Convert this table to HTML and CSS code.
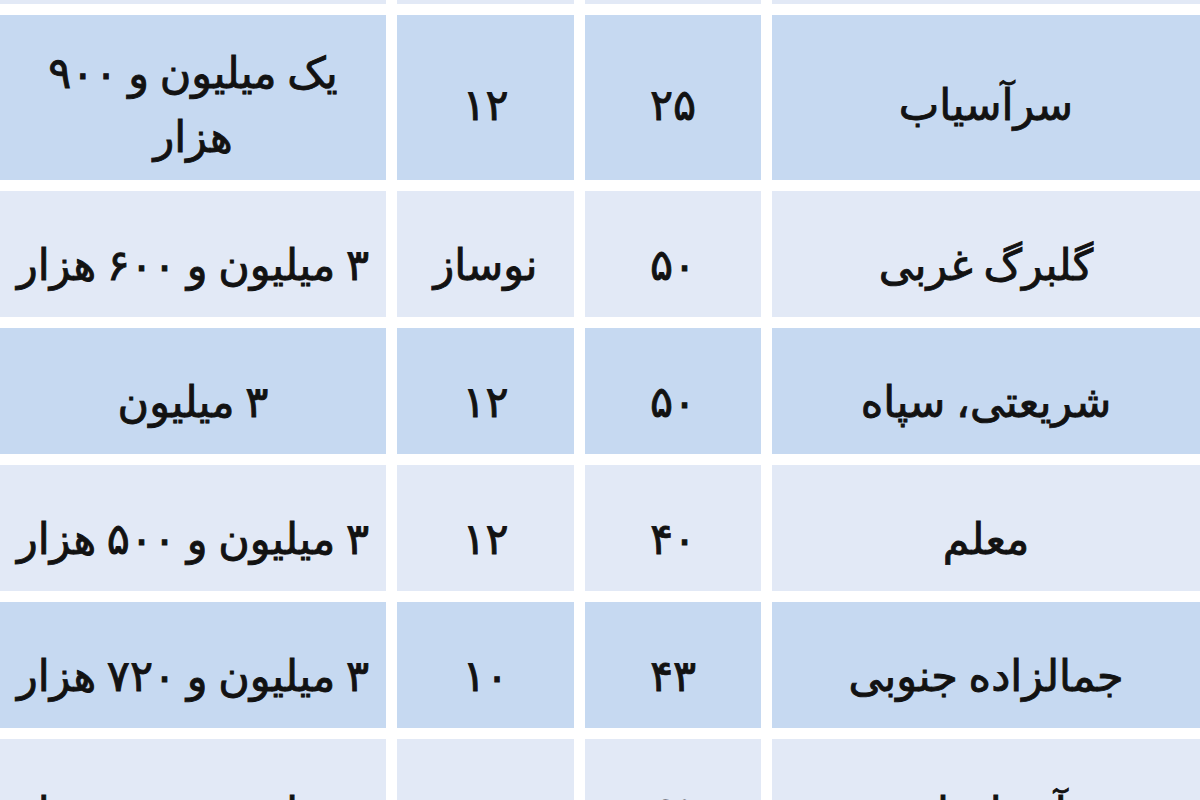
FILE: index.html
```html
<!DOCTYPE html>
<html lang="fa" dir="rtl">
<head>
<meta charset="utf-8">
<title>قیمت اجاره</title>
<link rel="stylesheet" href="styles.css">
</head>
<body>
<div class="table">
  <div class="cell light strip"></div>
  <div class="cell light strip"></div>
  <div class="cell light strip"></div>
  <div class="cell light strip"></div>

  <div class="cell dark tall">سرآسیاب</div>
  <div class="cell dark tall">۲۵</div>
  <div class="cell dark tall">۱۲</div>
  <div class="cell dark tall price"><span class="wrap">یک میلیون و ۹۰۰<br>هزار</span></div>

  <div class="cell light">گلبرگ غربی</div>
  <div class="cell light">۵۰</div>
  <div class="cell light">نوساز</div>
  <div class="cell light price">۳ میلیون و ۶۰۰ هزار</div>

  <div class="cell dark">شریعتی، سپاه</div>
  <div class="cell dark">۵۰</div>
  <div class="cell dark">۱۲</div>
  <div class="cell dark price">۳ میلیون</div>

  <div class="cell light">معلم</div>
  <div class="cell light">۴۰</div>
  <div class="cell light">۱۲</div>
  <div class="cell light price">۳ میلیون و ۵۰۰ هزار</div>

  <div class="cell dark">جمالزاده جنوبی</div>
  <div class="cell dark">۴۳</div>
  <div class="cell dark">۱۰</div>
  <div class="cell dark price">۳ میلیون و ۷۲۰ هزار</div>

  <div class="cell light">آذربایجان</div>
  <div class="cell light">۴۵</div>
  <div class="cell light">۱۲</div>
  <div class="cell light price">۳ میلیون و ۸۳۰ هزار</div>
</div>
</body>
</html>
```

FILE: styles.css
```css
html, body {
  margin: 0;
  padding: 0;
  background: #ffffff;
}

body {
  width: 1200px;
  height: 800px;
  overflow: hidden;
  font-family: "DejaVu Sans", sans-serif;
  color: #121212;
}

.table {
  display: grid;
  direction: rtl;
  grid-template-columns: 428px 176px 177px 386px;
  grid-template-rows: 4px 165px repeat(5, 126px);
  column-gap: 11px;
  row-gap: 11px;
}

.cell {
  display: flex;
  align-items: center;
  justify-content: center;
  text-align: center;
  font-size: 43px;
  line-height: 64px;
  padding-top: 22px;
  box-sizing: border-box;
  white-space: nowrap;
  word-spacing: -3px;
  -webkit-text-stroke: 0.9px #121212;
}

.strip {
  padding: 0;
}

.tall {
  padding-top: 14px;
}

.dark {
  background: #c6d9f1;
}

.light {
  background: #e2e9f6;
}

.wrap {
  display: block;
}
```
